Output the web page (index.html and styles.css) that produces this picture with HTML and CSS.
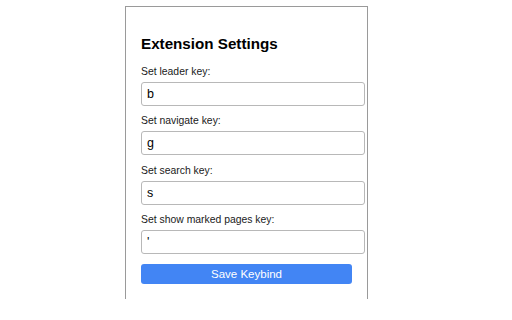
FILE: index.html
```html
<!DOCTYPE html>
<html>
<head>
<meta charset="utf-8">
<link rel="stylesheet" href="styles.css">
</head>
<body>
<div class="panel">
  <h1 class="title">Extension Settings</h1>
  <div class="field">
    <label class="label">Set leader key:</label>
    <input class="key" type="text" value="b">
  </div>
  <div class="field">
    <label class="label">Set navigate key:</label>
    <input class="key" type="text" value="g">
  </div>
  <div class="field">
    <label class="label">Set search key:</label>
    <input class="key" type="text" value="s">
  </div>
  <div class="field">
    <label class="label">Set show marked pages key:</label>
    <input class="key" type="text" value="'">
  </div>
  <button class="save">Save Keybind</button>
</div>
</body>
</html>
```
FILE: styles.css
```css
html, body {
  margin: 0;
  padding: 0;
  background: #ffffff;
}
body {
  font-family: "Liberation Sans", Arial, sans-serif;
  color: #000;
}
.panel {
  margin-left: 125px;
  margin-top: 6px;
  width: 211px;
  height: 292px;
  padding: 0 15px;
  border: 1px solid #9a9a9a;
  border-bottom: none;
  display: flex;
  flex-direction: column;
}
.title {
  margin: 28px 0 12px 0;
  font-size: 15.2px;
  line-height: 18px;
  font-weight: bold;
}
.field {
  display: flex;
  flex-direction: column;
  margin-bottom: 8.3px;
}
.label {
  font-size: 10.4px;
  line-height: 14px;
  color: #1a1a1a;
  margin-bottom: 3px;
}
.key {
  box-sizing: border-box;
  width: 224px;
  height: 24px;
  margin: 0;
  padding: 0 5px;
  border: 1px solid #b8b8b8;
  border-radius: 3px;
  font-family: "Liberation Sans", Arial, sans-serif;
  font-size: 12.5px;
  color: #000;
  background: #fff;
  outline: none;
}
.save {
  margin-top: 1.7px;
  width: 211px;
  height: 20px;
  border: none;
  border-radius: 3px;
  background: #4285f4;
  color: #fff;
  font-family: "Liberation Sans", Arial, sans-serif;
  font-size: 11.5px;
  padding: 0;
}
```
